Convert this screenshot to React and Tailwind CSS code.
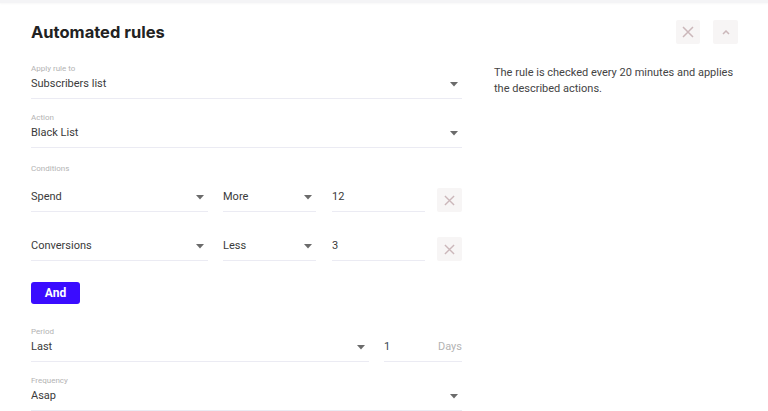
import { useState } from "react";

const Caret = () => (
  <svg width="8" height="5" viewBox="0 0 8 5" className="shrink-0">
    <path d="M0 0h8L4 4.5z" fill="#6b6b6b" />
  </svg>
);

const Cross = ({ size = 12 }) => (
  <svg width={size} height={size} viewBox="0 0 12 12">
    <path d="M1 1l10 10M11 1L1 11" stroke="#cbb7ba" strokeWidth="1.5" />
  </svg>
);

const Label = ({ children }) => (
  <div className="text-[8px] leading-[12px] text-[#b3b3b3]">{children}</div>
);

const SelectRow = ({ value, className = "" }) => (
  <div className={`flex items-center justify-between border-b border-[#ebebf3] pt-[1px] pb-[6px] pr-[4px] ${className}`}>
    <span className="text-[11px] leading-[16px] text-[#3a3a3a]">{value}</span>
    <Caret />
  </div>
);

const Field = ({ label, value, className = "" }) => (
  <div className={className}>
    <Label>{label}</Label>
    <SelectRow value={value} />
  </div>
);

function ConditionRow({ field, op, amount, className = "" }) {
  const [val, setVal] = useState(amount);
  return (
    <div className={`flex items-center ${className}`}>
      <SelectRow value={field} className="w-[177px]" />
      <SelectRow value={op} className="w-[93px] ml-[15px]" />
      <div className="w-[93px] ml-[16px] border-b border-[#ebebf3] pt-[1px] pb-[6px]">
        <input
          value={val}
          onChange={e => setVal(e.target.value)}
          className="block w-full h-[16px] p-0 bg-transparent outline-none text-[11px] leading-[16px] text-[#3a3a3a]"
        />
      </div>
      <button className="ml-[12px] w-[25px] h-[24px] flex items-center justify-center bg-[#f7f5f5] rounded-[2px]">
        <Cross size={11} />
      </button>
    </div>
  );
}

export default function App() {
  return (
    <div className="w-full h-[411px] overflow-hidden bg-white font-['Roboto',sans-serif]">
      <div className="h-[3px] bg-[#f4f4f6] shadow-[0_1px_2px_rgba(0,0,0,0.03)]" />

      <div className="pl-[31px] pr-[30px]">
        {/* Header */}
        <div className="flex items-center justify-between pt-[17px] h-[41px]">
          <h1 className="font-['Inter',sans-serif] font-bold text-[16.5px] text-[#222] leading-[24px]">
            Automated rules
          </h1>
          <div className="flex gap-[13px]">
            <button className="w-[24px] h-[24px] flex items-center justify-center bg-[#f7f5f5] rounded-[2px]">
              <Cross size={12} />
            </button>
            <button className="w-[25px] h-[24px] flex items-center justify-center bg-[#f7f5f5] rounded-[2px]">
              <svg width="8" height="5" viewBox="0 0 8 5">
                <path d="M1 4l3-3 3 3" stroke="#cbb7ba" strokeWidth="1.5" fill="none" />
              </svg>
            </button>
          </div>
        </div>

        <div className="flex mt-[19px]">
          {/* Form */}
          <div className="w-[431px] shrink-0">
            <Field label="Apply rule to" value="Subscribers list" />
            <Field label="Action" value="Black List" className="mt-[13px]" />

            <div className="mt-[15px]">
              <Label>Conditions</Label>
            </div>
            <ConditionRow field="Spend" op="More" amount="12" className="mt-[13px]" />
            <ConditionRow field="Conversions" op="Less" amount="3" className="mt-[25px]" />

            <button className="mt-[21px] w-[49px] h-[22px] rounded-[3px] bg-[#3a0cff] text-white text-[12px] font-bold flex items-center justify-center">
              And
            </button>

            <div className="mt-[22px]">
              <Label>Period</Label>
              <div className="flex">
                <SelectRow value="Last" className="w-[338px]" />
                <div className="w-[78px] ml-[15px] flex justify-between border-b border-[#ebebf3] pt-[1px] pb-[6px]">
                  <span className="text-[11px] leading-[16px] text-[#37474f]">1</span>
                  <span className="text-[11px] leading-[16px] text-[#b3b3b3]">Days</span>
                </div>
              </div>
            </div>

            <Field label="Frequency" value="Asap" className="mt-[13px]" />
          </div>

          {/* Description */}
          <div className="ml-[32px] mt-[2px] text-[11px] leading-[16px] text-[#444]">
            The rule is checked every 20 minutes and applies
            <br />
            the described actions.
          </div>
        </div>
      </div>
    </div>
  );
}
